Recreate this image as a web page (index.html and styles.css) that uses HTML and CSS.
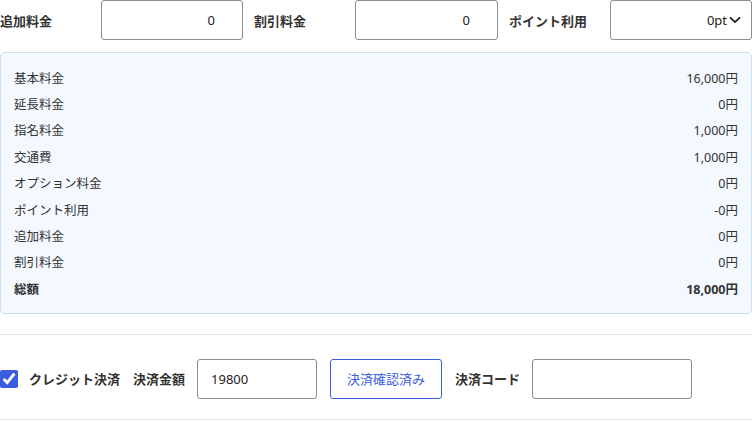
FILE: index.html
```html
<!DOCTYPE html>
<html lang="ja">
<head>
<meta charset="utf-8">
<link rel="stylesheet" href="styles.css">
</head>
<body>
<div class="page">
  <div class="top-row">
    <div class="field">
      <span class="label">追加料金</span>
      <div class="box num">0</div>
    </div>
    <div class="field">
      <span class="label">割引料金</span>
      <div class="box num">0</div>
    </div>
    <div class="field">
      <span class="label">ポイント利用</span>
      <div class="box select">
        <span>0pt</span>
        <svg class="chev" width="12" height="8" viewBox="0 0 12 8"><path d="M1.5 1.8 L6 6.2 L10.5 1.8" fill="none" stroke="#222" stroke-width="1.8" stroke-linecap="round" stroke-linejoin="round"/></svg>
      </div>
    </div>
  </div>

  <div class="summary">
    <div class="row"><span>基本料金</span><span>16,000円</span></div>
    <div class="row"><span>延長料金</span><span>0円</span></div>
    <div class="row"><span>指名料金</span><span>1,000円</span></div>
    <div class="row"><span>交通費</span><span>1,000円</span></div>
    <div class="row"><span>オプション料金</span><span>0円</span></div>
    <div class="row"><span>ポイント利用</span><span>-0円</span></div>
    <div class="row"><span>追加料金</span><span>0円</span></div>
    <div class="row"><span>割引料金</span><span>0円</span></div>
    <div class="row total"><span>総額</span><span>18,000円</span></div>
  </div>

  <div class="payment">
    <input class="check" type="checkbox" checked>
    <span class="label pl-credit">クレジット決済</span>
    <span class="label pl-amount">決済金額</span>
    <div class="box amount">19800</div>
    <button class="confirm">決済確認済み</button>
    <span class="label pl-code">決済コード</span>
    <div class="box code"></div>
  </div>
</div>
</body>
</html>
```

FILE: styles.css
```css
* { box-sizing: border-box; }
html, body { margin: 0; padding: 0; background: #fff; }
body {
  font-family: "Noto Sans", "Noto Sans CJK JP", sans-serif;
  font-size: 13px;
  color: #333;
  width: 752px;
}
.page { width: 752px; }

.top-row {
  display: grid;
  grid-template-columns: 243px 244px 243px;
  column-gap: 11px;
}
.field {
  display: flex;
  align-items: center;
  height: 40px;
}
.label {
  font-weight: 700;
  color: #333;
  white-space: nowrap;
}
.field .label { width: 101px; flex: none; }
.box {
  height: 40px;
  border: 1px solid #8c8c8c;
  border-radius: 3px;
  background: #fff;
  display: flex;
  align-items: center;
  color: #222;
  font-size: 13px;
}
.field .box { flex: 1; }
.num { justify-content: flex-end; padding-right: 27px; }
.select { justify-content: flex-end; padding-right: 10px; }
.select .chev { margin-left: 2px; }

.summary {
  margin-top: 12px;
  background: #f3f9ff;
  border: 1px solid #c8def3;
  border-radius: 5px;
  padding: 11px 13px 11px 13px;
}
.row {
  display: flex;
  justify-content: space-between;
  align-items: center;
  height: 26.4px;
  font-size: 12.5px;
  color: #333;
}
.row.total { font-weight: 700; }

.payment {
  margin-top: 20px;
  border-top: 1px solid #e6e6e6;
  border-bottom: 1px solid #e6e6e6;
  padding: 24px 0 20px;
  display: flex;
  align-items: center;
}
.check {
  margin: 0;
  width: 18px;
  height: 18px;
  accent-color: #3c5ce0;
  flex: none;
}
.pl-credit { margin-left: 11px; }
.pl-amount { margin-left: 13px; }
.amount {
  margin-left: 12px;
  width: 120px;
  padding-left: 13px;
}
.confirm {
  margin-left: 13px;
  width: 112px;
  height: 40px;
  border: 1px solid #3c5ce0;
  border-radius: 3px;
  background: #fff;
  color: #3c5ce0;
  font-family: "Noto Sans", "Noto Sans CJK JP", sans-serif;
  font-size: 13px;
  padding: 0;
}
.pl-code { margin-left: 13px; }
.code { margin-left: 12px; width: 160px; }
```
